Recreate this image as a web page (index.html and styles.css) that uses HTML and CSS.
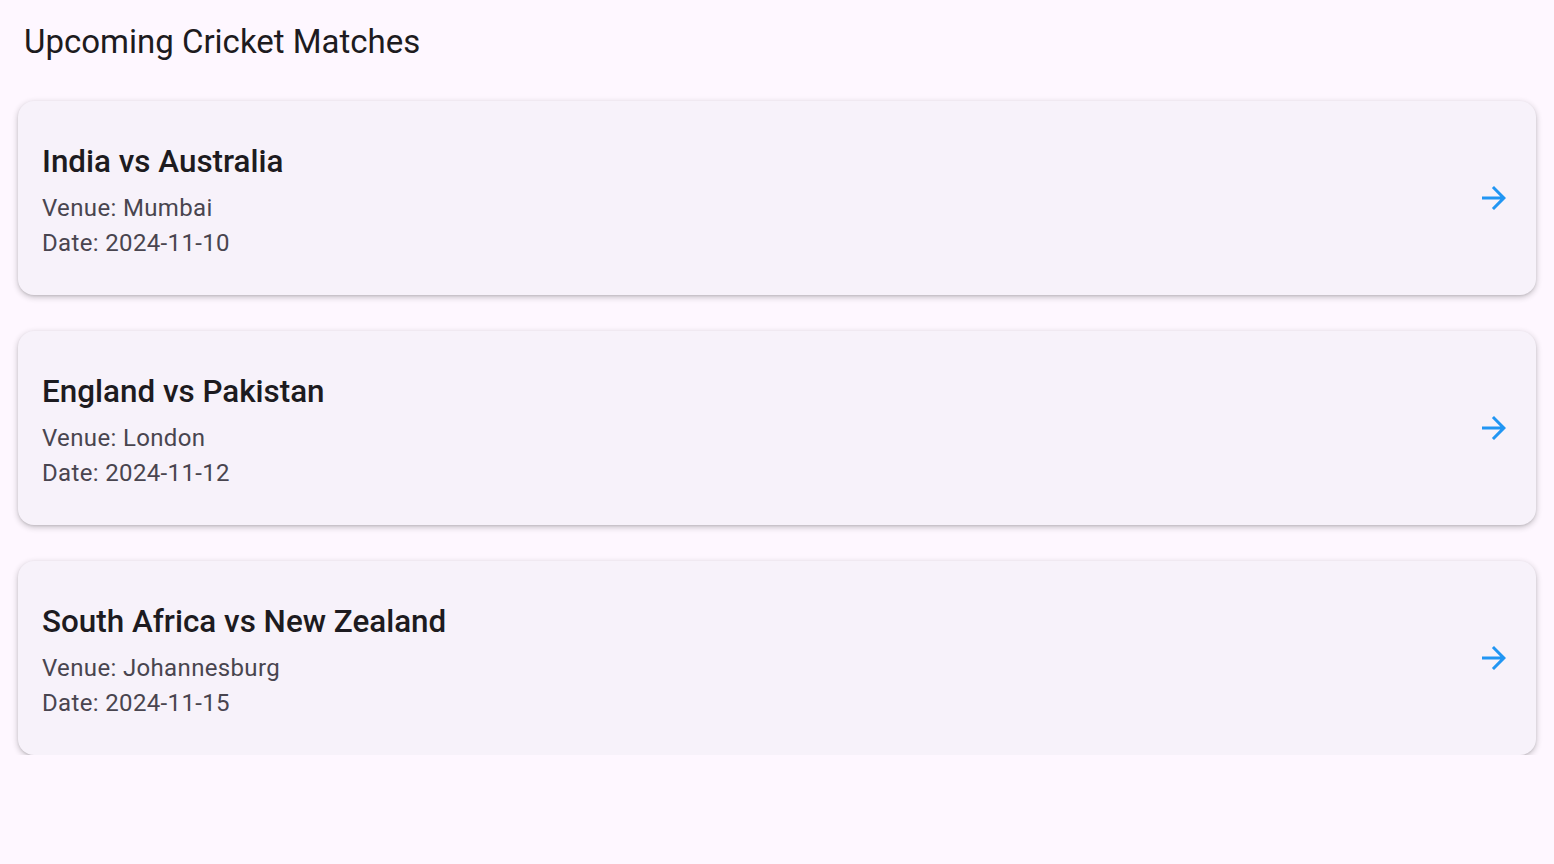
FILE: index.html
```html
<!DOCTYPE html>
<html>
<head>
<meta charset="utf-8">
<link rel="stylesheet" href="styles.css">
</head>
<body>
<header class="appbar"><h1 class="appbar-title">Upcoming Cricket Matches</h1></header>
<main class="list">
  <div class="card">
    <div class="info">
      <div class="title">India vs Australia</div>
      <div class="line">Venue: Mumbai</div>
      <div class="line">Date: 2024-11-10</div>
    </div>
    <svg class="arrow" viewBox="0 0 24 24"><path d="M12 4l-1.41 1.41L16.17 11H4v2h12.17l-5.58 5.59L12 20l8-8z"/></svg>
  </div>
  <div class="card">
    <div class="info">
      <div class="title">England vs Pakistan</div>
      <div class="line">Venue: London</div>
      <div class="line">Date: 2024-11-12</div>
    </div>
    <svg class="arrow" viewBox="0 0 24 24"><path d="M12 4l-1.41 1.41L16.17 11H4v2h12.17l-5.58 5.59L12 20l8-8z"/></svg>
  </div>
  <div class="card">
    <div class="info">
      <div class="title">South Africa vs New Zealand</div>
      <div class="line">Venue: Johannesburg</div>
      <div class="line">Date: 2024-11-15</div>
    </div>
    <svg class="arrow" viewBox="0 0 24 24"><path d="M12 4l-1.41 1.41L16.17 11H4v2h12.17l-5.58 5.59L12 20l8-8z"/></svg>
  </div>
</main>
</body>
</html>
```
FILE: styles.css
```css
html, body {
  margin: 0;
  padding: 0;
  background: #fef7ff;
  font-family: Roboto, "Noto Sans", sans-serif;
  color: #1d1b20;
}
.appbar {
  height: 82px;
  display: flex;
  align-items: center;
  padding: 2px 24px 0;
  box-sizing: border-box;
}
.appbar-title {
  margin: 0;
  font-size: 33px;
  font-weight: 400;
  line-height: 40px;
  color: #1d1b20;
}
.list {
  display: flex;
  flex-direction: column;
  gap: 36px;
  padding: 19px 18px 0;
}
.card {
  background: #f7f2fa;
  border-radius: 16px;
  box-shadow: 0 2px 6px rgba(0,0,0,0.24), 0 1px 2px rgba(0,0,0,0.08);
  height: 194px;
  box-sizing: border-box;
  display: flex;
  align-items: center;
  padding: 0 24px;
}
.info {
  flex: 1;
  display: flex;
  flex-direction: column;
  padding-top: 7px;
}
.title {
  font-size: 31.4px;
  font-weight: 500;
  line-height: 40px;
  margin-bottom: 9px;
  color: #1d1b20;
}
.line {
  font-size: 24px;
  line-height: 35px;
  color: #49454f;
  letter-spacing: 0.35px;
}
.arrow {
  width: 36px;
  height: 36px;
  fill: #2196f3;
}
```
